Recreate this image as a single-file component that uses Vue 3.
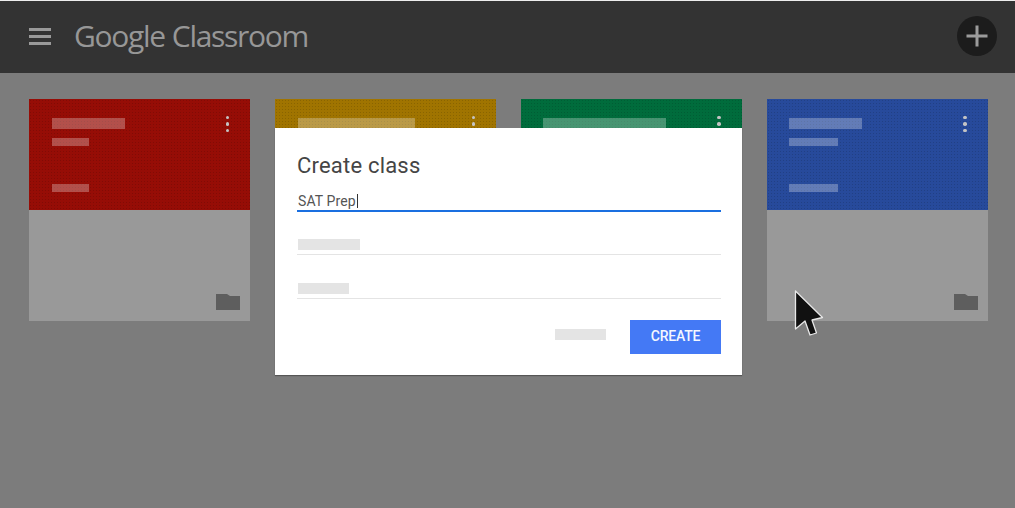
<script setup>
const cards = [
  { color: 'red', title: 73, line: 37, foot: 37 },
  { color: 'amber', title: 117, line: 37, foot: 37 },
  { color: 'green', title: 123, line: 37, foot: 37 },
  { color: 'blue', title: 73, line: 49, foot: 49 },
]
</script>

<template>
  <div class="page">
    <header class="topbar">
      <div class="menu"><i></i><i></i><i></i></div>
      <div class="logo"><span class="g">Google</span><span class="c">Classroom</span></div>
      <div class="add">
        <svg width="24" height="24" viewBox="0 0 24 24"><path d="M12 1.5v21M1.5 12h21" stroke="#9b9b9b" stroke-width="3" fill="none" /></svg>
      </div>
    </header>
    <main class="cards">
      <article v-for="c in cards" :key="c.color" class="card">
        <div class="card-top" :class="c.color">
          <div class="lines">
            <span class="bar title" :style="{ width: c.title + 'px' }"></span>
            <span class="bar sub" :style="{ width: c.line + 'px' }"></span>
            <span class="bar foot" :style="{ width: c.foot + 'px' }"></span>
          </div>
          <div class="dots"><i></i><i></i><i></i></div>
        </div>
        <div class="card-body">
          <svg class="folder" width="24" height="16" viewBox="0 0 24 16"><path d="M0 0h11l3 2h10v14H0z" fill="#5e5e5e" /></svg>
        </div>
      </article>
    </main>
    <section class="dialog">
      <h1>Create class</h1>
      <div class="field active"><span class="typed">SAT Prep</span><span class="caret"></span></div>
      <div class="field second"><span class="ph w1"></span></div>
      <div class="field third"><span class="ph w2"></span></div>
      <div class="actions">
        <span class="ph cancel"></span>
        <button class="create">CREATE</button>
      </div>
    </section>
    <svg class="cursor" width="32" height="48" viewBox="0 0 32 48">
      <path d="M1.5 2v38l9.500-8 5 14 6.500-2-4.500-13 10.500-2.500z" fill="#111" stroke="#e8e8e8" stroke-width="1.300" stroke-linejoin="round" />
    </svg>
  </div>
</template>

<style>
html, body { margin: 0; background: #7c7c7c; }
</style>

<style scoped>
.page {
  position: relative;
  width: 1015px;
  height: 508px;
  overflow: hidden;
  background: #7c7c7c;
  font-family: Roboto, "Liberation Sans", sans-serif;
  border-top: 1px solid #eee;
  box-sizing: border-box;
}
.topbar {
  height: 72px;
  box-sizing: border-box;
  background: #333;
  display: flex;
  align-items: center;
  padding: 0 18px 2px 29px;
}
.menu { width: 22px; display: flex; flex-direction: column; gap: 4px; }
.menu i { display: block; height: 3px; background: #9a9a9a; }
.logo {
  margin-left: 23px;
  margin-top: -2px;
  font-family: "Open Sans", sans-serif;
  font-size: 30px;
  letter-spacing: -1.3px;
  color: #979797;
  display: flex;
  gap: 7px;
}
.add {
  margin-left: auto;
  width: 40px;
  height: 40px;
  border-radius: 50%;
  background: #1c1c1c;
  display: flex;
  align-items: center;
  justify-content: center;
}
.cards {
  display: grid;
  grid-template-columns: repeat(4, 221px);
  column-gap: 24.8px;
  padding: 26px 0 0 29.4px;
}
.card { height: 221.5px; display: flex; flex-direction: column; }
.card-top {
  height: 110.5px;
  display: flex;
  justify-content: space-between;
  padding: 19px 21px 0 22.4px;
  box-sizing: border-box;
  background-image: radial-gradient(rgba(0, 0, 0, 0.14) 0.6px, transparent 0.8px);
  background-size: 3px 3px;
}
.red { background-color: #960d06; }
.amber { background-color: #a07400; }
.green { background-color: #006c3c; }
.blue { background-color: #274a9b; }
.lines { display: flex; flex-direction: column; align-items: flex-start; }
.bar { display: block; background: rgba(255, 255, 255, 0.28); }
.title { height: 11px; }
.sub { height: 8px; margin-top: 9px; }
.foot { height: 8px; margin-top: 38px; }
.dots { display: flex; flex-direction: column; gap: 3px; margin-top: -2.5px; }
.dots i { display: block; width: 3.5px; height: 3.5px; border-radius: 50%; background: #c4c4c4; }
.card-body {
  flex: 1;
  background: #999;
  display: flex;
  justify-content: flex-end;
  align-items: flex-end;
  padding: 0 10px 11px 0;
}
.dialog {
  position: absolute;
  left: 275px;
  top: 127px;
  width: 467px;
  height: 247px;
  box-sizing: border-box;
  padding: 0 21px 0 22px;
  background: #fff;
  box-shadow: 0 1px 1px rgba(0, 0, 0, 0.3);
  display: flex;
  flex-direction: column;
}
h1 {
  margin: 25px 0 0;
  font-size: 22px;
  line-height: 26px;
  font-weight: 400;
  color: #454545;
  letter-spacing: 0.2px;
}
.field {
  display: flex;
  align-items: flex-end;
  padding: 0 1px 1px;
  border-bottom: 1px solid #e4e4e4;
}
.active {
  margin-top: 12px;
  height: 21px;
  box-sizing: border-box;
  border-bottom: 2px solid #1a6fe0;
  align-items: flex-end;
  padding-bottom: 0;
}
.typed { font-size: 14px; line-height: 18px; color: #555; letter-spacing: 0.1px; }
.caret { width: 1px; height: 14px; background: #333; margin: 0 0 2px 1px; }
.second { margin-top: 28px; height: 15px; padding-bottom: 4px; box-sizing: border-box; }
.third { margin-top: 29px; height: 15px; padding-bottom: 4px; box-sizing: border-box; }
.ph { display: block; height: 11px; background: #e4e4e4; }
.w1 { width: 62px; }
.w2 { width: 51px; }
.actions {
  margin-top: 21px;
  display: flex;
  justify-content: flex-end;
  align-items: center;
  gap: 24px;
}
.cancel { width: 51px; position: relative; top: -3px; }
.create {
  width: 91px;
  height: 34px;
  padding: 0 0 3px;
  border: 0;
  background: #4479f5;
  color: #f4f7ff;
  font-family: Roboto, sans-serif;
  font-size: 14px;
  font-weight: 500;
  letter-spacing: -0.2px;
}
.cursor {
  position: absolute;
  left: 794px;
  top: 288px;
}
</style>
